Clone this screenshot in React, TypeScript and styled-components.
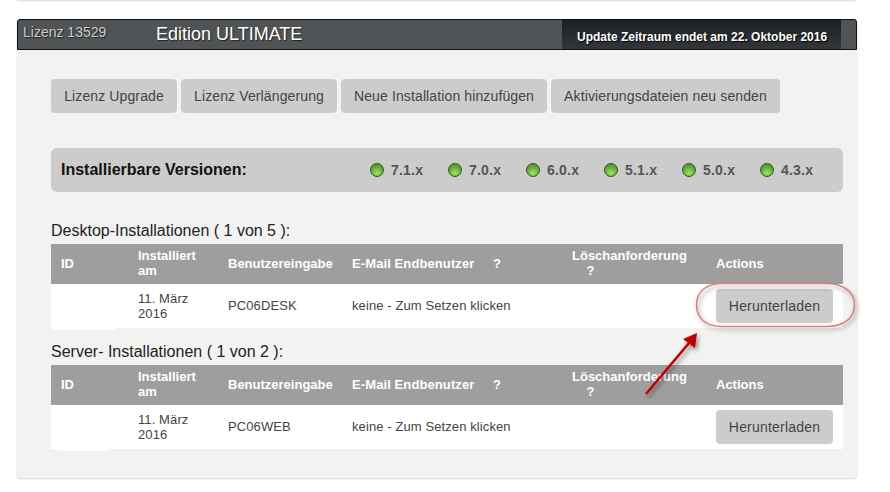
import styled, { createGlobalStyle } from 'styled-components';

const GlobalStyle = createGlobalStyle`
  html, body {
    margin: 0;
    padding: 0;
    background: #fff;
  }

  body {
    font-family: "Liberation Sans", Arial, sans-serif;
    color: #333;
  }
`;

const Page = styled.div`
  position: relative;
  width: 890px;
  height: 492px;
  overflow: hidden;
  padding: 19px 33px 0 17px;
  box-sizing: border-box;

  &::before {
    content: '';
    position: absolute;
    left: 17px;
    top: -1px;
    width: 839px;
    height: 1px;
    box-shadow: 0 1px 2px rgba(0, 0, 0, 0.25);
  }
`;

const Card = styled.div`
  height: 459px;
  background: #f2f2f2;
  border-radius: 4px;
  box-shadow: 0 1px 2px rgba(0, 0, 0, 0.18);
`;

const Header = styled.div`
  height: 29px;
  display: flex;
  align-items: stretch;
  border: 1px solid #111;
  border-radius: 3px 3px 0 0;
  background: #505456;
  padding-right: 15px;
`;

const LicenseId = styled.div`
  width: 138px;
  padding: 4px 0 0 5px;
  box-sizing: border-box;
  font-size: 14px;
  line-height: 16px;
  color: #ccc;
  text-shadow: 1px 1px 1px #222;
`;

const Edition = styled.div`
  flex: 1;
  padding-top: 4px;
  font-size: 18px;
  line-height: 21px;
  color: #fff;
  text-shadow: 1px 1px 1px #222;
`;

const UpdateNote = styled.div`
  width: 279px;
  padding: 10px 0 0 15px;
  box-sizing: border-box;
  background: linear-gradient(#1d2022, #32363a);
  font-size: 12px;
  font-weight: bold;
  line-height: 14px;
  color: #fff;
  white-space: nowrap;
  text-shadow: 1px 1px 1px #000;
`;

const Content = styled.div`
  padding: 29px 14px 0 34px;
`;

const ButtonRow = styled.div`
  display: flex;
  gap: 4px;
`;

const GreyButton = styled.div<{ $width: number }>`
  width: ${(p) => p.$width}px;
  height: 34px;
  display: flex;
  align-items: center;
  justify-content: center;
  background: #ccc;
  border-radius: 4px;
  font-size: 14px;
  letter-spacing: 0.12px;
  color: #444;
  white-space: nowrap;
`;

const VersionBar = styled.div`
  margin-top: 35px;
  height: 44px;
  display: flex;
  align-items: center;
  background: #ccc;
  border-radius: 6px;
  padding-left: 10px;
`;

const VersionTitle = styled.div`
  width: 309px;
  font-size: 16px;
  font-weight: bold;
  color: #111;
`;

const VersionList = styled.div`
  display: flex;
`;

const Version = styled.div`
  width: 78px;
  display: flex;
  align-items: center;
  gap: 7px;
  font-size: 14px;
  font-weight: bold;
  letter-spacing: 0.2px;
  color: #555;
`;

const Led = styled.span`
  width: 14px;
  height: 14px;
  box-sizing: border-box;
  border: 1px solid #2c5a1c;
  border-radius: 50%;
  background: radial-gradient(circle at 50% 75%, #a4e070 0%, #6cb03c 50%, #3f7f22 100%);
`;

const SectionTitle = styled.div<{ $top: number }>`
  margin-top: ${(p) => p.$top}px;
  height: 23px;
  font-size: 16px;
  line-height: 20px;
  color: #222;
  white-space: nowrap;
`;

const Table = styled.table`
  width: 792px;
  table-layout: fixed;
  border-collapse: collapse;
  background: #fff;
`;

const HeadCell = styled.th<{ $width: number }>`
  width: ${(p) => p.$width}px;
  height: 40px;
  padding: 0 10px 2px;
  box-sizing: border-box;
  background: #9e9e9e;
  color: #fff;
  font-size: 13px;
  font-weight: bold;
  line-height: 15px;
  text-align: left;
`;

const EmailHeadCell = styled(HeadCell)`
  letter-spacing: 0.1px;
`;

const Cell = styled.td`
  height: 44px;
  padding: 0 10px;
  box-sizing: border-box;
  font-size: 13px;
  line-height: 15px;
  letter-spacing: 0.1px;
  color: #444;
`;

const RaisedCell = styled(Cell)`
  padding-bottom: 2px;
`;

const IdCell = styled(Cell)`
  position: relative;
`;

const IdMask = styled.span<{ $left: number; $width: number }>`
  position: absolute;
  left: ${(p) => p.$left}px;
  bottom: -2px;
  width: ${(p) => p.$width}px;
  height: 4px;
  background: #fff;
`;

const DownloadButton = styled(GreyButton)`
  letter-spacing: 0.2px;
`;

const Annotation = styled.svg`
  position: absolute;
  left: 0;
  top: 0;
  pointer-events: none;
`;

const versions = ['7.1.x', '7.0.x', '6.0.x', '5.1.x', '5.0.x', '4.3.x'];

interface IInstallTable {
  name: string;
  mask: { left: number; width: number };
}

const InstallTable = ({ name, mask }: IInstallTable) => (
  <Table>
    <thead>
      <tr>
        <HeadCell $width={77}>ID</HeadCell>
        <HeadCell $width={90}>Installiert am</HeadCell>
        <HeadCell $width={124}>Benutzereingabe</HeadCell>
        <EmailHeadCell $width={220}>E-Mail Endbenutzer &nbsp;&nbsp;&nbsp;&nbsp;?</EmailHeadCell>
        <HeadCell $width={144}>
          Löschanforderung
          <br />
          &nbsp;&nbsp;&nbsp;&nbsp;?
        </HeadCell>
        <HeadCell $width={137}>Actions</HeadCell>
      </tr>
    </thead>
    <tbody>
      <tr>
        <IdCell>
          <IdMask $left={mask.left} $width={mask.width} />
        </IdCell>
        <Cell>11. März 2016</Cell>
        <RaisedCell>{name}</RaisedCell>
        <RaisedCell>keine - Zum Setzen klicken</RaisedCell>
        <Cell />
        <Cell>
          <DownloadButton $width={117}>Herunterladen</DownloadButton>
        </Cell>
      </tr>
    </tbody>
  </Table>
);

const App = () => (
  <Page>
    <GlobalStyle />
    <Card>
      <Header>
        <LicenseId>Lizenz 13529</LicenseId>
        <Edition>Edition ULTIMATE</Edition>
        <UpdateNote>Update Zeitraum endet am 22. Oktober 2016</UpdateNote>
      </Header>
      <Content>
        <ButtonRow>
          <GreyButton $width={126}>Lizenz Upgrade</GreyButton>
          <GreyButton $width={156}>Lizenz Verlängerung</GreyButton>
          <GreyButton $width={206}>Neue Installation hinzufügen</GreyButton>
          <GreyButton $width={229}>Aktivierungsdateien neu senden</GreyButton>
        </ButtonRow>
        <VersionBar>
          <VersionTitle>Installierbare Versionen:</VersionTitle>
          <VersionList>
            {versions.map((version) => (
              <Version key={version}>
                <Led />
                {version}
              </Version>
            ))}
          </VersionList>
        </VersionBar>
        <SectionTitle $top={29}>Desktop-Installationen ( 1 von 5 ):</SectionTitle>
        <InstallTable name="PC06DESK" mask={{ left: 0, width: 66 }} />
        <SectionTitle $top={14}>Server- Installationen ( 1 von 2 ):</SectionTitle>
        <InstallTable name="PC06WEB" mask={{ left: 6, width: 52 }} />
      </Content>
    </Card>
    <Annotation width="890" height="492" viewBox="0 0 890 492">
      <defs>
        <filter id="soft" x="-20%" y="-20%" width="150%" height="150%">
          <feDropShadow dx="2" dy="3" stdDeviation="2" floodColor="#000" floodOpacity="0.4" />
        </filter>
      </defs>
      <path
        d="M696.5 305C696.5 291 707 283.5 722 283.5L826 283.5C844 283.5 854.5 292 854.5 305C854.5 318 844 326.5 826 326.5L722 326.5C707 326.5 696.5 319 696.5 305Z"
        fill="none"
        stroke="#d97f7f"
        strokeWidth="1.6"
        filter="url(#soft)"
      />
      <g filter="url(#soft)">
        <line x1="646" y1="394" x2="689" y2="343" stroke="#c00000" strokeWidth="2.6" />
        <polygon points="697,333 683,339 695,348" fill="#c00000" />
      </g>
    </Annotation>
  </Page>
);

export default App;
